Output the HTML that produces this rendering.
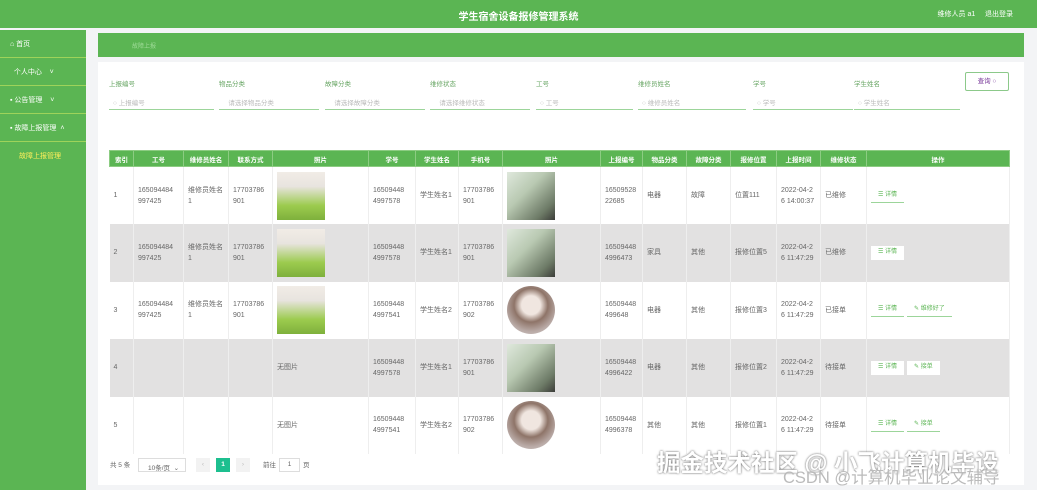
<!DOCTYPE html>
<html><head><meta charset="utf-8"><style>
*{margin:0;padding:0;box-sizing:border-box}
body{width:1037px;height:490px;overflow:hidden;background:#f3f4f6;font-family:"Liberation Sans","Noto Sans CJK SC",sans-serif;font-size:7px;color:#666;position:relative}
.top{position:absolute;left:0;top:0;width:1037px;height:28px;background:#5bb553;color:#fff}
.top .t{position:absolute;left:0;width:1037px;top:8px;text-align:center;font-size:10px;font-weight:bold}
.top .r{position:absolute;right:24px;top:9px;font-size:7px}
.side{position:absolute;left:0;top:30px;width:86px;height:460px;background:#5bb553}
.side div{height:28px;border-bottom:1px solid #9ed35a;color:#fff;padding:9px 0 0 10px;font-size:7px}
.side .sub{color:#ffef5a;border:none;padding-left:19px}
.crumb{position:absolute;left:98px;top:33px;width:926px;height:24px;background:#5bb553;color:#9fdc98;font-size:6px;padding:8px 0 0 34px}
.panel{position:absolute;left:98px;top:62px;width:926px;height:423px;background:#fff}
.lbl{position:absolute;top:78px;font-size:6.5px;color:#6aa766}
.inp{position:absolute;top:93px;height:17px;border-bottom:1px solid #9cd59a;font-size:6.5px;color:#bbb;padding:4px 0 0 4px}
.btn{position:absolute;left:965px;top:72px;width:44px;height:19px;border:1px solid #8cc98a;border-radius:2px;color:#7a3a9a;font-size:6.5px;text-align:center;line-height:17px}
table{position:absolute;left:109px;top:150px;width:900px;border-collapse:collapse;table-layout:fixed}
th{background:#5bb553;color:#fff;font-size:6.5px;height:16px;border:1px solid #8ccc82;font-weight:bold}
td{height:57.5px;border-right:1px solid #eee;padding:0 4px;font-size:7px;color:#666;line-height:11px;vertical-align:middle}
tr.g td{background:#e2e1e1}
.ph{width:48px;height:48px;display:block}
.a{background:linear-gradient(#f1ece6 0,#e8e4df 30%,#9ccb4e 70%,#7eb03c 100%);position:relative}
.b{background:linear-gradient(135deg,#dfe8dc,#b9c9b2 40%,#6d7a66 80%,#3b3c39)}
.c{border-radius:50%;background:radial-gradient(circle at 50% 40%,#f0e6e0 25%,#8e7468 45%,#b9aaa6 70%,#d7d1cf)}
.op{display:inline-block;height:14px;padding:0 7px;font-size:6px;color:#5bb553;border-bottom:1px solid #9cd59a;line-height:13px;margin-right:3px}
tr.g .op{background:#fff;border:none}
.pg{position:absolute;top:459px;font-size:6.5px;color:#666}
.wm{position:absolute;left:657px;top:444px;font-size:23.5px;color:#fff;text-shadow:0 0 2px #555;font-weight:bold;white-space:nowrap}
.wm2{position:absolute;left:783px;top:464px;font-size:16.5px;color:#bbb;white-space:nowrap}
</style></head><body>
<div class="top"><div class="t">学生宿舍设备报修管理系统</div><div class="r">维修人员 a1 &nbsp;&nbsp;&nbsp; 退出登录</div></div>
<div class="side"><div>⌂ 首页</div><div>&nbsp; 个人中心 &nbsp;&nbsp;&nbsp;˅</div><div>▪ 公告管理 &nbsp;&nbsp;&nbsp;˅</div><div>▪ 故障上报管理 &nbsp;˄</div><div class="sub">故障上报管理</div></div>
<div class="crumb">故障上报</div>
<div class="panel"></div>
<div class="lbl" style="left:109px">上报编号</div><div class="inp" style="left:109px;width:105px">○ 上报编号</div>
<div class="lbl" style="left:219px">物品分类</div><div class="inp" style="left:219px;width:100px">&nbsp;&nbsp;&nbsp;请选择物品分类</div>
<div class="lbl" style="left:325px">故障分类</div><div class="inp" style="left:325px;width:100px">&nbsp;&nbsp;&nbsp;请选择故障分类</div>
<div class="lbl" style="left:430px">维修状态</div><div class="inp" style="left:430px;width:100px">&nbsp;&nbsp;&nbsp;请选择维修状态</div>
<div class="lbl" style="left:536px">工号</div><div class="inp" style="left:536px;width:97px">○ 工号</div>
<div class="lbl" style="left:638px">维修员姓名</div><div class="inp" style="left:638px;width:108px">○ 维修员姓名</div>
<div class="lbl" style="left:753px">学号</div><div class="inp" style="left:753px;width:100px">○ 学号</div>
<div class="lbl" style="left:854px">学生姓名</div><div class="inp" style="left:854px;width:106px">○ 学生姓名</div>
<div class="btn">查询 ○</div>
<table>
<colgroup><col style="width:24px"><col style="width:50px"><col style="width:45px"><col style="width:44px"><col style="width:96px"><col style="width:47px"><col style="width:43px"><col style="width:44px"><col style="width:98px"><col style="width:42px"><col style="width:44px"><col style="width:44px"><col style="width:46px"><col style="width:44px"><col style="width:46px"><col style="width:143px"></colgroup>
<tr><th>索引</th><th>工号</th><th>维修员姓名</th><th>联系方式</th><th>照片</th><th>学号</th><th>学生姓名</th><th>手机号</th><th>照片</th><th>上报编号</th><th>物品分类</th><th>故障分类</th><th>报修位置</th><th>上报时间</th><th>维修状态</th><th>操作</th></tr>
<tr><td>1</td><td>165094484 997425</td><td>维修员姓名1</td><td>17703786 901</td><td><span class="ph a"></span></td><td>16509448 4997578</td><td>学生姓名1</td><td>17703786 901</td><td><span class="ph b"></span></td><td>16509528 22685</td><td>电器</td><td>故障</td><td>位置111</td><td>2022-04-2 6 14:00:37</td><td>已维修</td><td><span class="op">☰ 详情</span></td></tr>
<tr class="g"><td>2</td><td>165094484 997425</td><td>维修员姓名1</td><td>17703786 901</td><td><span class="ph a"></span></td><td>16509448 4997578</td><td>学生姓名1</td><td>17703786 901</td><td><span class="ph b"></span></td><td>16509448 4996473</td><td>家具</td><td>其他</td><td>报修位置5</td><td>2022-04-2 6 11:47:29</td><td>已维修</td><td><span class="op">☰ 详情</span></td></tr>
<tr><td>3</td><td>165094484 997425</td><td>维修员姓名1</td><td>17703786 901</td><td><span class="ph a"></span></td><td>16509448 4997541</td><td>学生姓名2</td><td>17703786 902</td><td><span class="ph c"></span></td><td>16509448 499648</td><td>电器</td><td>其他</td><td>报修位置3</td><td>2022-04-2 6 11:47:29</td><td>已接单</td><td><span class="op">☰ 详情</span><span class="op">✎ 维修好了</span></td></tr>
<tr class="g"><td>4</td><td></td><td></td><td></td><td>无图片</td><td>16509448 4997578</td><td>学生姓名1</td><td>17703786 901</td><td><span class="ph b"></span></td><td>16509448 4996422</td><td>电器</td><td>其他</td><td>报修位置2</td><td>2022-04-2 6 11:47:29</td><td>待接单</td><td><span class="op">☰ 详情</span><span class="op">✎ 接单</span></td></tr>
<tr><td>5</td><td></td><td></td><td></td><td>无图片</td><td>16509448 4997541</td><td>学生姓名2</td><td>17703786 902</td><td><span class="ph c"></span></td><td>16509448 4996378</td><td>其他</td><td>其他</td><td>报修位置1</td><td>2022-04-2 6 11:47:29</td><td>待接单</td><td><span class="op">☰ 详情</span><span class="op">✎ 接单</span></td></tr>
</table>
<div class="pg" style="left:110px">共 5 条</div>
<div class="pg" style="left:138px;top:458px;width:48px;height:14px;border:1px solid #ddd;padding:3px 0 0 9px">10条/页 &nbsp;⌄</div>
<div class="pg" style="left:196px;top:458px;width:14px;height:14px;background:#f2f2f2;color:#bbb;text-align:center;line-height:14px">‹</div>
<div class="pg" style="left:216px;top:458px;width:14px;height:14px;background:#1dbf8f;color:#fff;font-weight:bold;text-align:center;line-height:14px">1</div>
<div class="pg" style="left:236px;top:458px;width:14px;height:14px;background:#f2f2f2;color:#bbb;text-align:center;line-height:14px">›</div>
<div class="pg" style="left:263px">前往</div>
<div class="pg" style="left:279px;top:458px;width:21px;height:14px;border:1px solid #ddd;text-align:center;line-height:12px">1</div>
<div class="pg" style="left:303px">页</div>
<div class="wm">掘金技术社区 @ 小飞计算机毕设</div>
<div class="wm2">CSDN @计算机毕业论文辅导</div>
</body></html>
